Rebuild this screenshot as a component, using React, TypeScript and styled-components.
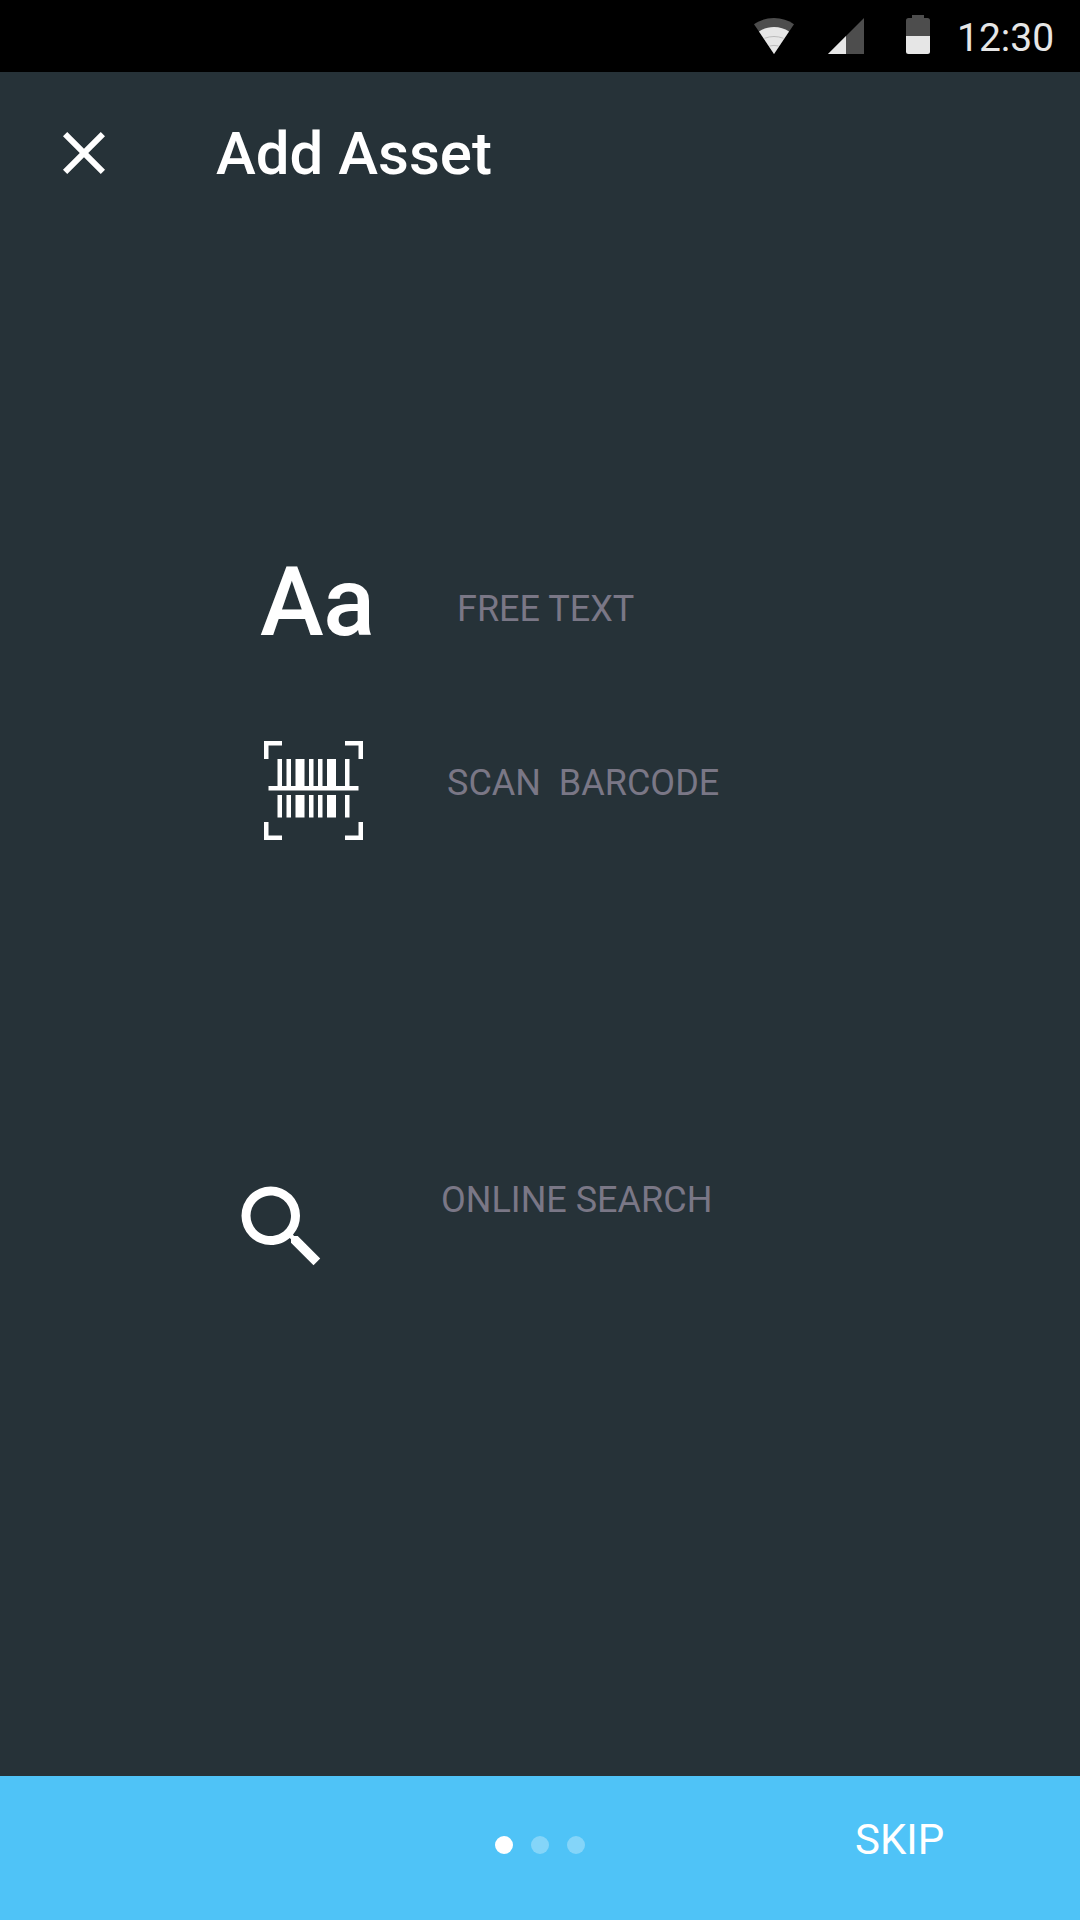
import React from "react";
import styled, { createGlobalStyle } from "styled-components";

const GlobalStyle = createGlobalStyle`
  *, *::before, *::after { box-sizing: border-box; }
  body { margin: 0; background: #263238; }
  button { border: 0; padding: 0; background: none; color: inherit; font: inherit; text-align: left; }
  svg { display: block; flex: none; }
`;

const Screen = styled.div`
  display: flex;
  flex-direction: column;
  width: 1080px;
  height: 1920px;
  background: #263238;
  color: #fff;
  font-family: Roboto, sans-serif;
  overflow: hidden;
`;

const StatusBar = styled.header`
  display: flex;
  align-items: flex-start;
  justify-content: flex-end;
  height: 72px;
  padding: 15px 24px 0 0;
  background: #000;
`;

const StatusIcon = styled.svg<{ $gap: number }>`
  margin-right: ${(p) => p.$gap}px;
`;

const Clock = styled.time`
  width: 99px;
  font-size: 39px;
  line-height: 46px;
  color: #e6e6e6;
  white-space: nowrap;
`;

const AppBar = styled.div`
  display: flex;
  align-items: center;
  height: 168px;
  padding: 0 48px;
`;

const CloseButton = styled.button`
  width: 72px;
  height: 72px;
  margin: -6px 96px 0 0;
`;

const Title = styled.h1`
  margin: 0 0 4px;
  font-size: 60px;
  font-weight: 500;
  line-height: 70px;
`;

const Options = styled.main`
  display: flex;
  flex: 1;
  flex-direction: column;
  padding-top: 306px;
`;

const Option = styled.button<{ $height: number; $inset: number }>`
  display: flex;
  align-items: flex-start;
  height: ${(p) => p.$height}px;
  padding-left: ${(p) => p.$inset}px;
`;

const Glyph = styled.span<{ $width: number }>`
  flex: none;
  width: ${(p) => p.$width}px;
`;

const Letters = styled.span`
  display: block;
  font-size: 96px;
  font-weight: 500;
  line-height: 112px;
  letter-spacing: -0.5px;
`;

const Label = styled.span<{ $top: number }>`
  padding-top: ${(p) => p.$top}px;
  font-size: 36px;
  line-height: 42px;
  color: #7a7786;
  white-space: pre;
`;

const Footer = styled.footer`
  display: grid;
  grid-template-columns: 1fr auto 1fr;
  height: 144px;
  background: #4fc3f7;
`;

const Pager = styled.div`
  display: flex;
  grid-column: 2;
  gap: 18px;
  padding-top: 60px;
`;

const Dot = styled.span<{ $active?: boolean }>`
  width: 18px;
  height: 18px;
  border-radius: 50%;
  background: ${(p) => (p.$active ? "#fff" : "rgba(255, 255, 255, 0.3)")};
`;

const SkipButton = styled.button`
  align-self: start;
  justify-self: start;
  margin: 39px 0 0 270px;
  font-size: 42px;
  line-height: 50px;
`;

const BARS = [
  [3, 1],
  [5, 1],
  [7, 2],
  [10, 1],
  [12, 1],
  [14, 2],
  [18, 1],
];

const WifiIcon = () => (
  <StatusIcon $gap={34} width="40" height="39" viewBox="0 0 40 39">
    <path d="M0 9.2C5.6 5.3 12.4 3 20 3s14.400 2.300 20 6.200L20 39z" fill="#4d4d4d" />
    <path d="M5 16.400C9.300 13.600 14.400 12 20 12s10.700 1.600 15 4.400L20 39z" fill="#e6e6e6" />
    <path d="M10.500 23.300Q20 19.700 29.500 23.300M15.500 31Q20 29.800 24.500 31" fill="none" stroke="#b0b0b0" strokeWidth="0.8" />
  </StatusIcon>
);

const SignalIcon = () => (
  <StatusIcon $gap={42} width="36" height="39" viewBox="0 0 36 39">
    <path d="M0 39L36 3v36z" fill="#4d4d4d" />
    <path d="M0 39l18-18v18z" fill="#e6e6e6" />
  </StatusIcon>
);

const BatteryIcon = () => (
  <StatusIcon $gap={27} width="24" height="39" viewBox="0 0 24 39">
    <path d="M6 0h12v3h3.500A2.500 2.500 0 0 1 24 5.500V21H0V5.500A2.500 2.500 0 0 1 2.500 3H6z" fill="#4d4d4d" />
    <path d="M0 21h24v15.500a2.500 2.500 0 0 1-2.500 2.500h-19A2.500 2.500 0 0 1 0 36.500z" fill="#e6e6e6" />
  </StatusIcon>
);

const CloseIcon = () => (
  <svg width="72" height="72" viewBox="0 0 24 24" fill="#fff">
    <path d="M19 6.410L17.590 5 12 10.590 6.410 5 5 6.410 10.590 12 5 17.590 6.410 19 12 13.410 17.590 19 19 17.590 13.410 12z" />
  </svg>
);

const BarcodeIcon = () => (
  <svg width="99" height="99" viewBox="0 0 22 22" fill="#fff">
    <path d="M0 0h4v1H1v3H0zM18 0h4v4h-1V1h-3zM0 18h1v3h3v1H0zM21 18h1v4h-4v-1h3z" />
    <path d="M1 10h20v1H1z" />
    {BARS.map(([x, w]) => (
      <path key={x} d={`M${x} 4h${w}v6h-${w}zM${x} 12h${w}v5h-${w}z`} />
    ))}
  </svg>
);

const SearchIcon = () => (
  <svg width="108" height="108" viewBox="0 0 24 24" fill="#fff">
    <path d="M15.500 14h-.790l-.280-.270A6.471 6.471 0 0 0 16 9.500 6.500 6.500 0 1 0 9.500 16c1.610 0 3.090-.590 4.230-1.570l.270.280v.790l5 4.990L20.490 19l-4.990-5zm-6 0C7.010 14 5 11.990 5 9.500S7.010 5 9.500 5 14 7.010 14 9.500 11.990 14 9.500 14z" />
  </svg>
);

export default function App() {
  return (
    <Screen>
      <GlobalStyle />
      <StatusBar>
        <WifiIcon />
        <SignalIcon />
        <BatteryIcon />
        <Clock>12:30</Clock>
      </StatusBar>
      <AppBar>
        <CloseButton aria-label="Close">
          <CloseIcon />
        </CloseButton>
        <Title>Add Asset</Title>
      </AppBar>
      <Options>
        <Option $height={195} $inset={260}>
          <Glyph $width={197}>
            <Letters>Aa</Letters>
          </Glyph>
          <Label $top={42}>FREE TEXT</Label>
        </Option>
        <Option $height={432} $inset={264}>
          <Glyph $width={183}>
            <BarcodeIcon />
          </Glyph>
          <Label $top={21}>{"SCAN  BARCODE"}</Label>
        </Option>
        <Option $height={108} $inset={228}>
          <Glyph $width={213}>
            <SearchIcon />
          </Glyph>
          <Label $top={6}>ONLINE SEARCH</Label>
        </Option>
      </Options>
      <Footer>
        <Pager>
          <Dot $active />
          <Dot />
          <Dot />
        </Pager>
        <SkipButton>SKIP</SkipButton>
      </Footer>
    </Screen>
  );
}
